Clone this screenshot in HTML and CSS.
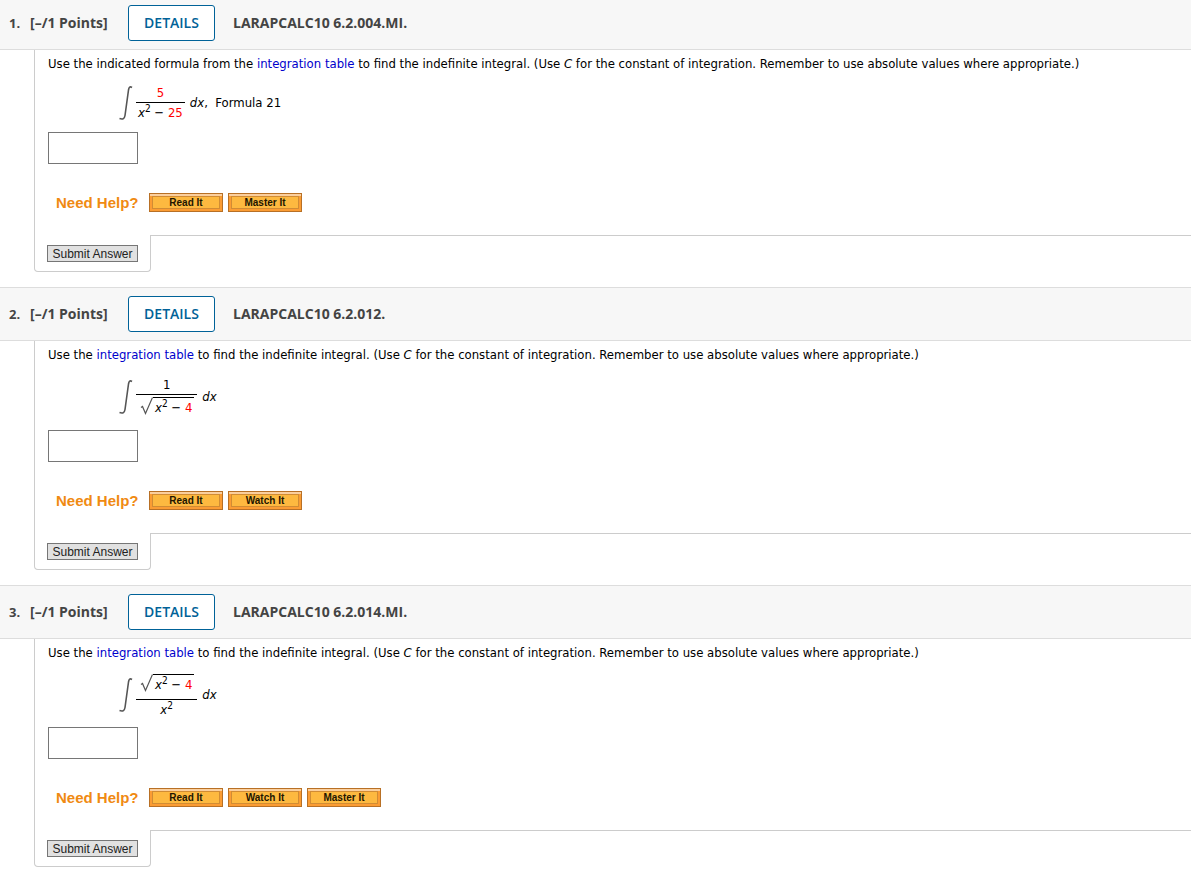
FILE: index.html
```
<!DOCTYPE html>
<html lang="en">
<head>
  <meta charset="UTF-8">
  <meta name="viewport" content="width=device-width, initial-scale=1.0">
  <title>Integration Tables</title>
  <link rel="stylesheet" href="styles.css">
</head>
<body>
  <div class="assignment">
    <section class="question">
      <div class="question-header">
        <span class="number">1.</span>
        <span class="points">[–/1 Points]</span>
        <button type="button" class="details">DETAILS</button>
        <span class="name">LARAPCALC10 6.2.004.MI.</span>
      </div>
      <div class="question-body">
        <p>Use the indicated formula from the <a href="#">integration table</a> to find the indefinite integral. (Use <i>C</i> for the constant of integration. Remember to use absolute values where appropriate.)</p>
        <div class="equation">
          <svg class="integral" width="14" height="34" viewBox="0 0 14 34"><path d="M13 1.500C11 .2 10 1 9.500 4L6 29.500C5.500 33 3.500 33.500 .5 32.500" fill="none" stroke="#555" stroke-width="1.600"/></svg>
          <div class="fraction">
            <div class="top"><span class="red">5</span></div>
            <div class="bottom"><i>x</i><sup>2</sup> − <span class="red">25</span></div>
          </div>
          <span class="dx"><i>dx</i>,&nbsp; Formula 21</span>
        </div>
        <input type="text" class="answer" aria-label="Answer 1">
        <div class="help">
          <span class="help-title">Need Help?</span>
          <button type="button">Read It</button>
          <button type="button">Master It</button>
        </div>
      </div>
      <div class="question-footer">
        <div class="submit-tab"><button type="submit" class="submit">Submit Answer</button></div>
        <div class="line"></div>
      </div>
    </section>

    <section class="question">
      <div class="question-header">
        <span class="number">2.</span>
        <span class="points">[–/1 Points]</span>
        <button type="button" class="details">DETAILS</button>
        <span class="name">LARAPCALC10 6.2.012.</span>
      </div>
      <div class="question-body">
        <p>Use the <a href="#">integration table</a> to find the indefinite integral. (Use <i>C</i> for the constant of integration. Remember to use absolute values where appropriate.)</p>
        <div class="equation root-below">
          <svg class="integral" width="14" height="34" viewBox="0 0 14 34"><path d="M13 1.500C11 .2 10 1 9.500 4L6 29.500C5.500 33 3.500 33.500 .5 32.500" fill="none" stroke="#555" stroke-width="1.600"/></svg>
          <div class="fraction">
            <div class="top">1</div>
            <div class="bottom root">
              <svg width="13" height="18" viewBox="0 0 13 18"><path d="M1 10.500L2.500 9.500L5.500 16.500L12.500 .5" fill="none" stroke="#555" stroke-width="1.200"/></svg>
              <span class="radicand"><i>x</i><sup>2</sup> − <span class="red">4</span></span>
            </div>
          </div>
          <span class="dx"><i>dx</i></span>
        </div>
        <input type="text" class="answer" aria-label="Answer 2">
        <div class="help">
          <span class="help-title">Need Help?</span>
          <button type="button">Read It</button>
          <button type="button">Watch It</button>
        </div>
      </div>
      <div class="question-footer">
        <div class="submit-tab"><button type="submit" class="submit">Submit Answer</button></div>
        <div class="line"></div>
      </div>
    </section>

    <section class="question">
      <div class="question-header">
        <span class="number">3.</span>
        <span class="points">[–/1 Points]</span>
        <button type="button" class="details">DETAILS</button>
        <span class="name">LARAPCALC10 6.2.014.MI.</span>
      </div>
      <div class="question-body">
        <p>Use the <a href="#">integration table</a> to find the indefinite integral. (Use <i>C</i> for the constant of integration. Remember to use absolute values where appropriate.)</p>
        <div class="equation root-above">
          <svg class="integral" width="14" height="34" viewBox="0 0 14 34"><path d="M13 1.500C11 .2 10 1 9.500 4L6 29.500C5.500 33 3.500 33.500 .5 32.500" fill="none" stroke="#555" stroke-width="1.600"/></svg>
          <div class="fraction">
            <div class="top root">
              <svg width="13" height="18" viewBox="0 0 13 18"><path d="M1 10.500L2.500 9.500L5.500 16.500L12.500 .5" fill="none" stroke="#555" stroke-width="1.200"/></svg>
              <span class="radicand"><i>x</i><sup>2</sup> − <span class="red">4</span></span>
            </div>
            <div class="bottom"><i>x</i><sup>2</sup></div>
          </div>
          <span class="dx"><i>dx</i></span>
        </div>
        <input type="text" class="answer" aria-label="Answer 3">
        <div class="help">
          <span class="help-title">Need Help?</span>
          <button type="button">Read It</button>
          <button type="button">Watch It</button>
          <button type="button">Master It</button>
        </div>
      </div>
      <div class="question-footer">
        <div class="submit-tab"><button type="submit" class="submit">Submit Answer</button></div>
        <div class="line"></div>
      </div>
    </section>
  </div>
</body>
</html>
```
FILE: styles.css
```
*{
  margin: 0;
  padding: 0;
  box-sizing: border-box;
}
body{
  background: #fff;
  color: #000;
  font: 13px/18px "DejaVu Sans Condensed", "DejaVu Sans", Verdana, sans-serif;
}
.assignment{
  margin-top: -4px;
  overflow: hidden;
}
.question{
  margin-bottom: 15px;
}
.question:last-child{
  margin-bottom: 0;
}
.question-header{
  display: flex;
  align-items: center;
  padding: 8px 9px;
  background: #f7f7f7;
  border-top: 1px solid #ddd;
  border-bottom: 1px solid #ddd;
  color: #444;
  font: bold 14px/18px "Open Sans", sans-serif;
}
.number{
  width: 21px;
  font-size: 13px;
}
.points{
  width: 98px;
}
.details{
  width: 87px;
  height: 36px;
  margin-right: 18px;
  background: #fff;
  border: 1px solid #006298;
  border-radius: 3px;
  color: #006298;
  font: 600 14px/18px "Open Sans", sans-serif;
}
.question-body{
  margin-left: 34px;
  padding: 5px 13px 23px;
  border-left: 1px solid #ccc;
}
.question-body a{
  color: #00c;
  text-decoration: none;
}
.equation{
  display: flex;
  align-items: center;
  height: 59px;
  padding-left: 71px;
}
.root-below{
  height: 66px;
}
.root-above{
  height: 65px;
}
.integral{
  margin-right: 3px;
}
.fraction{
  text-align: center;
}
.top{
  padding: 0 2px;
}
.bottom{
  padding: 1px 2px 0;
  border-top: 1px solid #000;
}
sup{
  font-size: 10px;
  line-height: 0;
}
.root{
  display: flex;
  padding: 2px 3px 0 4px;
}
.top.root{
  padding: 4px 3px 4px 4px;
}
.radicand{
  height: 21px;
  padding: 1px 2px 0;
  border-top: 1px solid #000;
}
.dx{
  margin-left: 5px;
}
.red{
  color: #f00;
}
.answer{
  display: block;
  width: 90px;
  height: 32px;
  padding: 0 4px;
  border: 1px solid #767676;
}
.help{
  display: flex;
  align-items: center;
  gap: 5px;
  margin-top: 29px;
  padding-left: 8px;
  font-family: "Liberation Sans", Arial, sans-serif;
}
.help-title{
  width: 88px;
  color: #f08a12;
  font-size: 15px;
  font-weight: bold;
  white-space: nowrap;
}
.help button{
  width: 74px;
  height: 19px;
  border: 1px solid #b87025;
  background: #fdb940;
  box-shadow: inset 0 2px 0 #fbcf9d, inset 0 0 0 2px #fb9c33, inset 0 0 0 3px #d18c34;
  color: #221500;
  font: bold 10px/15px "Liberation Sans", Arial, sans-serif;
}
.question-footer{
  display: flex;
  margin-left: 34px;
}
.submit-tab{
  display: flex;
  height: 37px;
  padding: 10px 12px 9px;
  border: 1px solid #ccc;
  border-top: none;
  border-radius: 0 0 4px 4px;
}
.submit{
  width: 91px;
  height: 17px;
  border: 1px solid #767676;
  background: #e1e1e1;
  color: #222;
  font: 12px/14px "Liberation Sans", Arial, sans-serif;
}
.line{
  flex: 1;
  border-top: 1px solid #ccc;
}
```
